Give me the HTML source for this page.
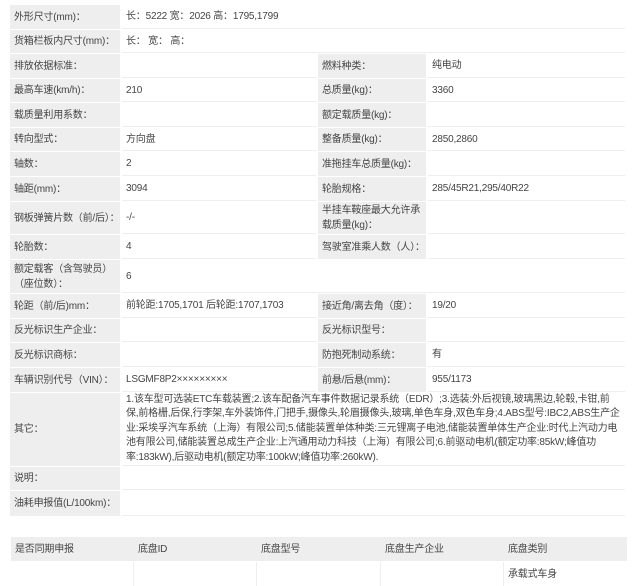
<!DOCTYPE html><html><head><meta charset="utf-8"><style>
body{margin:0;width:640px;height:586px;background:#fff;position:relative;overflow:hidden;font-family:"Liberation Sans","Noto Sans CJK SC",sans-serif;font-size:10px;color:#444}
.c{position:absolute;box-sizing:border-box;padding:0 4px;display:flex;align-items:center;line-height:15px;white-space:nowrap;letter-spacing:-0.2px}
.w{white-space:normal}
.l{background:#eeeeee}
.v{background:#fff;border-bottom:1px solid #eee}
</style></head><body>
<div class="c l" style="left:10px;top:5px;width:110px;height:24px">外形尺寸(mm)：</div>
<div class="c v" style="left:122px;top:5px;width:503px;height:24px">长：5222 宽：2026 高：1795,1799</div>
<div class="c l" style="left:10px;top:30px;width:110px;height:23px">货箱栏板内尺寸(mm)：</div>
<div class="c v" style="left:122px;top:30px;width:503px;height:23px">长： 宽： 高：</div>

<div class="c l" style="left:10px;top:54px;width:110px;height:24px">排放依据标准：</div>
<div class="c v" style="left:122px;top:54px;width:194px;height:24px"></div>
<div class="c l" style="left:318px;top:54px;width:108px;height:24px">燃料种类：</div>
<div class="c v" style="left:428px;top:54px;width:197px;height:24px">纯电动</div>

<div class="c l" style="left:10px;top:79px;width:110px;height:23px">最高车速(km/h)：</div>
<div class="c v" style="left:122px;top:79px;width:194px;height:23px">210</div>
<div class="c l" style="left:318px;top:79px;width:108px;height:23px">总质量(kg)：</div>
<div class="c v" style="left:428px;top:79px;width:197px;height:23px">3360</div>

<div class="c l" style="left:10px;top:103px;width:110px;height:24px">载质量利用系数：</div>
<div class="c v" style="left:122px;top:103px;width:194px;height:24px"></div>
<div class="c l" style="left:318px;top:103px;width:108px;height:24px">额定载质量(kg)：</div>
<div class="c v" style="left:428px;top:103px;width:197px;height:24px"></div>

<div class="c l" style="left:10px;top:128px;width:110px;height:23px">转向型式：</div>
<div class="c v" style="left:122px;top:128px;width:194px;height:23px">方向盘</div>
<div class="c l" style="left:318px;top:128px;width:108px;height:23px">整备质量(kg)：</div>
<div class="c v" style="left:428px;top:128px;width:197px;height:23px">2850,2860</div>

<div class="c l" style="left:10px;top:152px;width:110px;height:24px">轴数：</div>
<div class="c v" style="left:122px;top:152px;width:194px;height:24px">2</div>
<div class="c l" style="left:318px;top:152px;width:108px;height:24px">准拖挂车总质量(kg)：</div>
<div class="c v" style="left:428px;top:152px;width:197px;height:24px"></div>

<div class="c l" style="left:10px;top:177px;width:110px;height:24px">轴距(mm)：</div>
<div class="c v" style="left:122px;top:177px;width:194px;height:24px">3094</div>
<div class="c l" style="left:318px;top:177px;width:108px;height:24px">轮胎规格：</div>
<div class="c v" style="left:428px;top:177px;width:197px;height:24px">285/45R21,295/40R22</div>

<div class="c l" style="left:10px;top:202px;width:110px;height:32px">钢板弹簧片数（前/后）：</div>
<div class="c v" style="left:122px;top:202px;width:194px;height:32px">-/-</div>
<div class="c l w" style="left:318px;top:202px;width:108px;height:32px">半挂车鞍座最大允许承载质量(kg)：</div>
<div class="c v" style="left:428px;top:202px;width:197px;height:32px"></div>

<div class="c l" style="left:10px;top:235px;width:110px;height:24px">轮胎数：</div>
<div class="c v" style="left:122px;top:235px;width:194px;height:24px">4</div>
<div class="c l" style="left:318px;top:235px;width:108px;height:24px">驾驶室准乘人数（人）：</div>
<div class="c v" style="left:428px;top:235px;width:197px;height:24px"></div>

<div class="c l w" style="left:10px;top:260px;width:110px;height:33px">额定载客（含驾驶员）（座位数）：</div>
<div class="c v" style="left:122px;top:260px;width:503px;height:33px">6</div>

<div class="c l" style="left:10px;top:294px;width:110px;height:24px">轮距（前/后)mm：</div>
<div class="c v" style="left:122px;top:294px;width:194px;height:24px">前轮距:1705,1701 后轮距:1707,1703</div>
<div class="c l" style="left:318px;top:294px;width:108px;height:24px">接近角/离去角（度）：</div>
<div class="c v" style="left:428px;top:294px;width:197px;height:24px">19/20</div>

<div class="c l" style="left:10px;top:319px;width:110px;height:23px">反光标识生产企业：</div>
<div class="c v" style="left:122px;top:319px;width:194px;height:23px"></div>
<div class="c l" style="left:318px;top:319px;width:108px;height:23px">反光标识型号：</div>
<div class="c v" style="left:428px;top:319px;width:197px;height:23px"></div>

<div class="c l" style="left:10px;top:343px;width:110px;height:24px">反光标识商标：</div>
<div class="c v" style="left:122px;top:343px;width:194px;height:24px"></div>
<div class="c l" style="left:318px;top:343px;width:108px;height:24px">防抱死制动系统：</div>
<div class="c v" style="left:428px;top:343px;width:197px;height:24px">有</div>

<div class="c l" style="left:10px;top:368px;width:110px;height:24px">车辆识别代号（VIN）：</div>
<div class="c v" style="left:122px;top:368px;width:194px;height:24px">LSGMF8P2×××××××××</div>
<div class="c l" style="left:318px;top:368px;width:108px;height:24px">前悬/后悬(mm)：</div>
<div class="c v" style="left:428px;top:368px;width:197px;height:24px">955/1173</div>

<div class="c l" style="left:10px;top:393px;width:110px;height:73px">其它：</div>
<div class="c v w" style="left:122px;top:393px;width:503px;height:73px;line-height:14.5px">1.该车型可选装ETC车载装置;2.该车配备汽车事件数据记录系统（EDR）;3.选装:外后视镜,玻璃黑边,轮毂,卡钳,前保,前格栅,后保,行李架,车外装饰件,门把手,摄像头,轮眉摄像头,玻璃,单色车身,双色车身;4.ABS型号:IBC2,ABS生产企业:采埃孚汽车系统（上海）有限公司;5.储能装置单体种类:三元锂离子电池,储能装置单体生产企业:时代上汽动力电池有限公司,储能装置总成生产企业:上汽通用动力科技（上海）有限公司;6.前驱动电机(额定功率:85kW;峰值功率:183kW),后驱动电机(额定功率:100kW;峰值功率:260kW).</div>

<div class="c l" style="left:10px;top:467px;width:110px;height:23px">说明：</div>
<div class="c v" style="left:122px;top:467px;width:503px;height:23px"></div>
<div class="c l" style="left:10px;top:491px;width:110px;height:25px">油耗申报值(L/100km)：</div>
<div class="c v" style="left:122px;top:491px;width:503px;height:25px"></div>

<div class="c l" style="left:11px;top:537px;width:616px;height:24px"></div>
<div class="c" style="left:11px;top:537px;width:123px;height:24px">是否同期申报</div>
<div class="c" style="left:134px;top:537px;width:123px;height:24px">底盘ID</div>
<div class="c" style="left:257px;top:537px;width:124px;height:24px">底盘型号</div>
<div class="c" style="left:381px;top:537px;width:123px;height:24px">底盘生产企业</div>
<div class="c" style="left:504px;top:537px;width:123px;height:24px">底盘类别</div>
<div class="c" style="left:11px;top:562px;width:123px;height:24px;border-right:1px solid #eee"></div>
<div class="c" style="left:134px;top:562px;width:123px;height:24px;border-right:1px solid #eee"></div>
<div class="c" style="left:257px;top:562px;width:124px;height:24px;border-right:1px solid #eee"></div>
<div class="c" style="left:381px;top:562px;width:123px;height:24px;border-right:1px solid #eee"></div>
<div class="c" style="left:504px;top:562px;width:123px;height:24px">承载式车身</div>
</body></html>
